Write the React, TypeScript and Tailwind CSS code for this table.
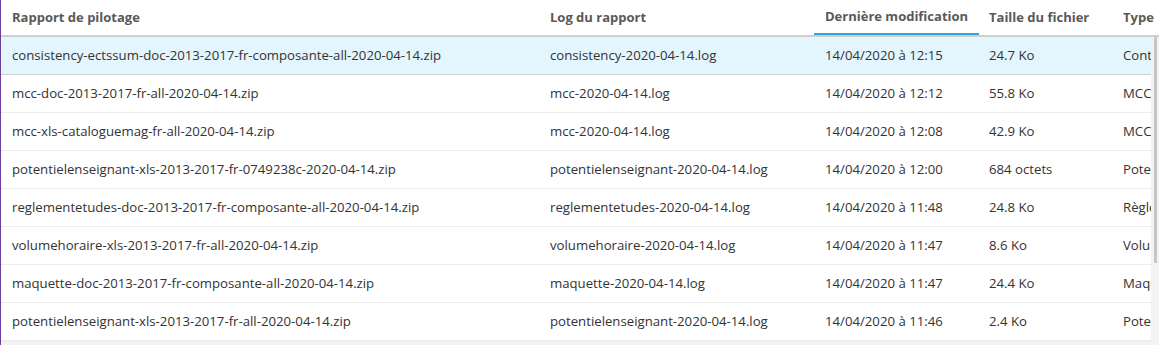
const rows = [
    ['consistency-ectssum-doc-2013-2017-fr-composante-all-2020-04-14.zip', 'consistency-2020-04-14.log', '14/04/2020 à 12:15', '24.7 Ko', 'Contrôle de cohérence'],
    ['mcc-doc-2013-2017-fr-all-2020-04-14.zip', 'mcc-2020-04-14.log', '14/04/2020 à 12:12', '55.8 Ko', 'MCC'],
    ['mcc-xls-cataloguemag-fr-all-2020-04-14.zip', 'mcc-2020-04-14.log', '14/04/2020 à 12:08', '42.9 Ko', 'MCC'],
    ['potentielenseignant-xls-2013-2017-fr-0749238c-2020-04-14.zip', 'potentielenseignant-2020-04-14.log', '14/04/2020 à 12:00', '684 octets', 'Potentiel enseignant'],
    ['reglementetudes-doc-2013-2017-fr-composante-all-2020-04-14.zip', 'reglementetudes-2020-04-14.log', '14/04/2020 à 11:48', '24.8 Ko', 'Règlement des études'],
    ['volumehoraire-xls-2013-2017-fr-all-2020-04-14.zip', 'volumehoraire-2020-04-14.log', '14/04/2020 à 11:47', '8.6 Ko', 'Volume horaire'],
    ['maquette-doc-2013-2017-fr-composante-all-2020-04-14.zip', 'maquette-2020-04-14.log', '14/04/2020 à 11:47', '24.4 Ko', 'Maquette'],
    ['potentielenseignant-xls-2013-2017-fr-all-2020-04-14.zip', 'potentielenseignant-2020-04-14.log', '14/04/2020 à 11:46', '2.4 Ko', 'Potentiel enseignant'],
]

const cols = 'grid grid-cols-[537px_276px_165px_132px_1fr]'

const App = () => {
    return (
        <div
            className="flex h-[345px] w-[1159px] flex-col overflow-hidden border-l border-[#6b3f9e] bg-white text-[13.2px] text-[#333]"
            style={{ fontFamily: '"Open Sans", "Noto Sans", sans-serif' }}
        >
            <div className={`${cols} h-[37px] shrink-0 border-b-2 border-[#cfcfcf] text-[13px] font-bold text-[#595959]`}>
                <div className="flex items-center pl-[11px]">Rapport de pilotage</div>
                <div className="flex items-center pl-3">Log du rapport</div>
                <div className="flex items-center border-b-2 border-[#2ba6de] pl-[11px]">Dernière modification</div>
                <div className="flex items-center pl-[10px]">Taille du fichier</div>
                <div className="flex items-center overflow-hidden whitespace-nowrap pl-3">Type</div>
            </div>

            <div className="flex min-h-0 flex-1">
                <div className="min-w-0 flex-1 overflow-hidden">
                    {rows.map((row, index) => (
                        <div
                            key={index}
                            className={`${cols} h-[38px] border-b ${
                                index === 0 ? 'border-[#d2d2d2] bg-[#e3f5fd]' : 'border-[#ececec]'
                            }`}
                        >
                            <div className="flex items-center whitespace-nowrap pl-[11px]">{row[0]}</div>
                            <div className="flex items-center whitespace-nowrap pl-3">{row[1]}</div>
                            <div className="flex items-center whitespace-nowrap pl-[11px]">{row[2]}</div>
                            <div className="flex items-center whitespace-nowrap pl-[10px]">{row[3]}</div>
                            <div className="flex items-center overflow-hidden whitespace-nowrap pl-3">{row[4]}</div>
                        </div>
                    ))}
                    <div className="h-full bg-[#f2f2f2]" />
                </div>

                <div className="flex w-2 shrink-0 flex-col bg-[#f3f3f3] pl-[3px]">
                    <div className="h-[226px] w-[3px] bg-[#c6c6c6]" />
                </div>
            </div>
        </div>
    )
}

export default App
